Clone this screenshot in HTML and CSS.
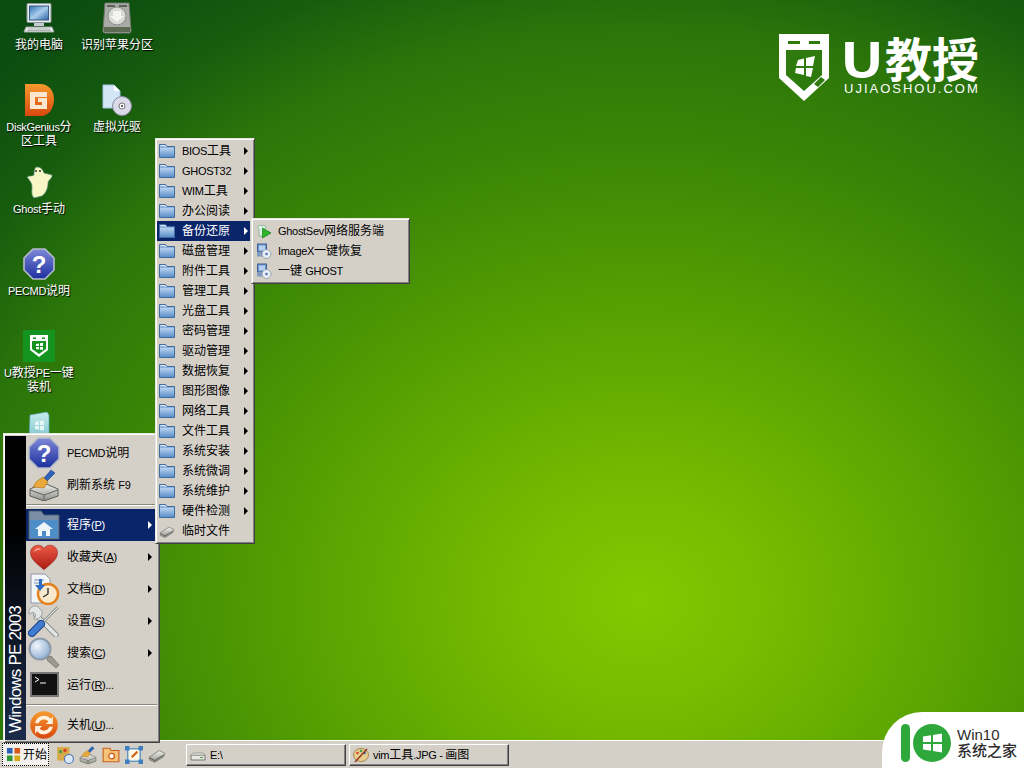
FILE: index.html
```html
<!DOCTYPE html>
<html lang="zh">
<head>
<meta charset="utf-8">
<title>Windows PE 2003</title>
<link rel="stylesheet" href="styles.css">
</head>
<body>
<svg class="defs" width="0" height="0" aria-hidden="true">
  <defs>
    <linearGradient id="gFolder" x1="0" y1="0" x2="0" y2="1"><stop offset="0" stop-color="#b9d2ee"/><stop offset="1" stop-color="#5d8fcb"/></linearGradient>
    <linearGradient id="gScreen" x1="0" y1="0" x2="1" y2="1"><stop offset="0" stop-color="#2d6fb5"/><stop offset=".5" stop-color="#a9cdea"/><stop offset="1" stop-color="#2b62a8"/></linearGradient>
    <linearGradient id="gHelp" x1="0" y1="0" x2="0" y2="1"><stop offset="0" stop-color="#7d88d8"/><stop offset="1" stop-color="#1c2f9e"/></linearGradient>
    <linearGradient id="gOrange" x1="0" y1="0" x2="0" y2="1"><stop offset="0" stop-color="#f79a2e"/><stop offset="1" stop-color="#d9480f"/></linearGradient>
    <linearGradient id="gHeart" x1="0" y1="0" x2="0" y2="1"><stop offset="0" stop-color="#ee5a45"/><stop offset="1" stop-color="#a81a12"/></linearGradient>
    <linearGradient id="gDisk" x1="0" y1="0" x2="0" y2="1"><stop offset="0" stop-color="#f2f2ee"/><stop offset="1" stop-color="#8f8f8a"/></linearGradient>
    <linearGradient id="gTeal" x1="0" y1="0" x2="0" y2="1"><stop offset="0" stop-color="#c9ecef"/><stop offset="1" stop-color="#6fbcc6"/></linearGradient>
    <radialGradient id="gLens" cx=".35" cy=".35" r=".8"><stop offset="0" stop-color="#f0f6fc"/><stop offset="1" stop-color="#7fa3cc"/></radialGradient>

    <symbol id="i-folder" viewBox="0 0 16 16">
      <path d="M.5 1.500h6l1.500 2h7.500v11H.5z" fill="#8eb2dc" stroke="#3f6c9f"/>
      <path d="M1 5h14v9H1z" fill="url(#gFolder)"/>
      <path d="M1.500 2.500h4.500l1 1.500" fill="none" stroke="#e6eef8"/>
    </symbol>
    <symbol id="i-eraser" viewBox="0 0 16 16">
      <path d="M1 10l9-6 5 2.500-1 3-8 5-4.500-2z" fill="url(#gDisk)" stroke="#77776f" stroke-width=".7"/>
      <path d="M1.500 10.500l4.500 2.500 8-5" fill="none" stroke="#5f5f58"/>
    </symbol>
    <symbol id="i-ghostsev" viewBox="0 0 16 16">
      <path d="M1 4l3-2 2 1 2-1 2 2-1.500 2v7H3V6z" fill="#dff3e4" stroke="#6ea487" stroke-width=".7"/>
      <path d="M6.500 5l8.500 5-8.500 5z" fill="#2fb52a" stroke="#137d17" stroke-width=".7"/>
    </symbol>
    <symbol id="i-imagex" viewBox="0 0 16 16">
      <rect x="1.500" y="1" width="9" height="8" fill="#6f97cc" stroke="#3c5f96"/>
      <rect x="3" y="2.500" width="6" height="5" fill="#b6d0ef"/>
      <path d="M1 10h9v3.500H1z" fill="#7f9cc2"/>
      <circle cx="10.500" cy="11" r="4.500" fill="#e8edf4" stroke="#7d8ca5" stroke-width=".7"/>
      <circle cx="10.500" cy="11" r="1.300" fill="#4b74b8"/>
    </symbol>

    <symbol id="i-computer" viewBox="0 0 32 32">
      <rect x="4" y="1.500" width="24" height="19" rx="1" fill="#e8ecee" stroke="#8a969c"/>
      <rect x="6.500" y="4" width="19" height="14" fill="url(#gScreen)" stroke="#385c7c"/>
      <rect x="11" y="21" width="10" height="3" fill="#c5ccd0"/>
      <path d="M3 25h26l2 5H1z" fill="#eef0ee" stroke="#9aa3a3"/>
      <path d="M5 27h22M4 28.500h24" stroke="#a8b0b0"/>
    </symbol>
    <symbol id="i-hdd" viewBox="0 0 32 32">
      <path d="M4 1h24l2 28a2 2 0 0 1-2 2H4a2 2 0 0 1-2-2z" fill="#a9aca6" stroke="#74776f"/>
      <circle cx="16" cy="14" r="9" fill="#d9dad6" stroke="#8b8e87"/>
      <path d="M12 9h8v5h3l-7 6-7-6h3z" fill="#f4f4f2"/>
      <rect x="3" y="25" width="26" height="5" fill="#5e6a52"/>
      <rect x="6" y="3" width="8" height="2" fill="#5d605a"/><rect x="18" y="3" width="8" height="2" fill="#5d605a"/>
    </symbol>
    <symbol id="i-diskgenius" viewBox="0 0 32 32">
      <path d="M2 0h15c9 0 14 7 14 15 0 9-5 17-13 17H2z" fill="url(#gOrange)"/>
      <path d="M7 8h17v5H12v8h7v-3h-4v-4h9v11H7z" fill="#fbe7d0"/>
    </symbol>
    <symbol id="i-vdisc" viewBox="0 0 32 32">
      <path d="M2 1h11l6 6v17H2z" fill="#d3e6f8" stroke="#a8c5e0"/>
      <path d="M13 1v6h6z" fill="#fff"/>
      <circle cx="21" cy="22" r="9.500" fill="#d9d9e8" stroke="#8b8ba5"/>
      <circle cx="21" cy="22" r="3" fill="#fff" stroke="#777"/>
      <circle cx="21" cy="22" r="1" fill="#333"/>
    </symbol>
    <symbol id="i-ghost" viewBox="0 0 32 32">
      <path d="M14 1c4 0 6 3 7 6l8 2c1 3-4 5-4 8 0 5-2 10-6 13l-8 2c-3-3-2-7-2-11 0-3-1-5-5-10 3-2 7 0 7-3 0-4 1-7 3-7z" fill="#f7f6c4" stroke="#4d8a7c" stroke-width=".7"/>
      <circle cx="13" cy="5" r="1" fill="#333"/><circle cx="17" cy="5" r="1" fill="#333"/>
    </symbol>
    <symbol id="i-help" viewBox="0 0 32 32">
      <path d="M10 1h12l9 9v12l-9 9H10l-9-9V10z" fill="url(#gHelp)" stroke="#b6bcc8" stroke-width="1.600"/>
      <text x="16" y="25" class="help-q">?</text>
    </symbol>
    <symbol id="i-ushield" viewBox="0 0 32 32">
      <rect width="32" height="32" fill="#14941e"/>
      <path d="M7 5h18v15l-9 7-9-7z" fill="#fff"/>
      <rect x="10" y="7.500" width="3" height="1.500" fill="#14941e"/><rect x="19" y="7.500" width="3" height="1.500" fill="#14941e"/>
      <path d="M9 11h14v8l-7 5-7-5z" fill="#14941e"/>
      <path d="M13 14l3-.5v2.500h-3zM17 13.300l3-.5v3.200h-3zM13 17h3v2.500l-3-.5zM17 17h3v3l-3-.5z" fill="#fff"/>
    </symbol>
    <symbol id="i-teal" viewBox="0 0 32 32">
      <path d="M7 3l17-3 2 3v29H6z" fill="url(#gTeal)" stroke="#5aa8b4" stroke-width=".7"/>
      <path d="M12 10l4-.7V13h-4zM17 9l4-.7V13h-4zM12 14h4v3.700l-4-.7zM17 14h4v4.600l-4-.7z" fill="#e6f6f7"/>
    </symbol>

    <symbol id="i-broom" viewBox="0 0 32 32">
      <path d="M2 20l14-6 14 6v7l-14 5-14-5z" fill="url(#gDisk)" stroke="#5c5c56"/>
      <path d="M2 21l14 5 14-5M16 26v6" fill="none" stroke="#65655f"/>
      <path d="M23 1l4 3-8 8-3-3z" fill="#2e62b8" stroke="#1d3f80" stroke-width=".6"/>
      <path d="M15 8l5 5-4 6-11-1 3-5z" fill="#e9a93a" stroke="#a46b14" stroke-width=".6"/>
    </symbol>
    <symbol id="i-home" viewBox="0 0 32 32">
      <path d="M1 2h12l3 4h15v24H1z" fill="#7a8ea5" stroke="#4d5e73"/>
      <path d="M2 11h28v18H2z" fill="#4f8dc8"/>
      <path d="M16 13l9 7h-3v7H10v-7H7z" fill="#eef5fb"/>
      <rect x="14" y="22" width="4" height="5" fill="#4f8dc8"/>
    </symbol>
    <symbol id="i-heart" viewBox="-3 -4 38 38">
      <path d="M16 30C6 22 0 17 0 10 0 4 5 1 9 1c3 0 5 1 7 4 2-3 4-4 7-4 4 0 9 3 9 9 0 7-6 12-16 20z" fill="url(#gHeart)" stroke="#8e2118" stroke-width=".7"/>
      <path d="M4 9c1-4 6-6 9-3-4 0-7 1-9 3z" fill="#f7a79c"/>
    </symbol>
    <symbol id="i-doc" viewBox="0 0 32 32">
      <path d="M3 1h14l5 5v24H3z" fill="#f2f5fa" stroke="#8d98aa"/>
      <path d="M6 7h10M6 10h8" stroke="#7a8db0"/>
      <circle cx="20" cy="21" r="10" fill="#f8e9cc" stroke="#e5801e" stroke-width="2.400"/>
      <path d="M20 21v-6M20 21l-5 3" stroke="#333" stroke-width="1.400"/>
      <path d="M11 6v6H7l5 6 5-6h-3V6z" fill="#2d6dc4"/>
    </symbol>
    <symbol id="i-tools" viewBox="0 0 32 32">
      <path d="M8 10l20 20" stroke="#8a8f8f" stroke-width="5.500" stroke-linecap="round"/>
      <path d="M8 10l20 20" stroke="#e4e6e6" stroke-width="3.500" stroke-linecap="round"/>
      <path d="M9 1C4 0 0 4 1 9l4-2 3 3-2 4c5 1 9-3 8-8z" fill="#e4e6e6" stroke="#8a8f8f" stroke-width=".8"/>
      <path d="M13 19L30 2" stroke="#8d9292" stroke-width="2.500"/>
      <path d="M13 19L30 2" stroke="#eceeee" stroke-width="1"/>
      <path d="M4 28l9-9" stroke="#1e4587" stroke-width="8" stroke-linecap="round"/>
      <path d="M4 28l9-9" stroke="#3f7bd0" stroke-width="6" stroke-linecap="round"/>
    </symbol>
    <symbol id="i-search" viewBox="0 0 32 32">
      <circle cx="12" cy="12" r="10.500" fill="url(#gLens)" stroke="#8d9aa7" stroke-width="2"/>
      <path d="M20 20l3-1 8 9-3 3-9-8z" fill="#9a9a90" stroke="#6a6a62" stroke-width=".7"/>
    </symbol>
    <symbol id="i-run" viewBox="0 0 32 32">
      <rect x="3" y="4" width="27" height="23" fill="#111" stroke="#77777a" stroke-width="2"/>
      <path d="M7 8l4 2.500L7 13" fill="none" stroke="#fff"/>
      <path d="M12 14h6" stroke="#fff"/>
    </symbol>
    <symbol id="i-power" viewBox="-2 -2 36 36">
      <circle cx="16" cy="16" r="15.500" fill="url(#gOrange)"/>
      <path d="M6 14a10.500 10.500 0 0 1 18-5l2-3v9h-8l3-3a6.500 6.500 0 0 0-11 2zM26 18a10.500 10.500 0 0 1-18 5l-2 3v-9h8l-3 3a6.500 6.500 0 0 0 11-2z" fill="#fdf0dc"/>
    </symbol>

    <symbol id="i-winflag" viewBox="0 0 16 16">
      <rect x="1" y="1" width="6" height="6" fill="#2e62b8"/><rect x="9" y="1" width="6" height="6" fill="#d95a1a"/>
      <rect x="1" y="9" width="6" height="6" fill="#2f9a35"/><rect x="9" y="9" width="6" height="6" fill="#d9a81a"/>
    </symbol>
    <symbol id="i-q1" viewBox="0 0 16 16">
      <rect x="1" y="1" width="11" height="12" fill="#d7a948"/>
      <circle cx="4" cy="5" r="1.500" fill="#3fa24a"/><circle cx="8" cy="4" r="1.500" fill="#d8412c"/>
      <circle cx="11.500" cy="11.500" r="4" fill="#dbe7f5" stroke="#4d78b8"/>
    </symbol>
    <symbol id="i-q3" viewBox="0 0 16 16">
      <path d="M1 2h6l1 2h7v10H1z" fill="#f5c27a" stroke="#c9601a"/>
      <circle cx="8.500" cy="9" r="2.500" fill="#fff" stroke="#c9601a" stroke-width="1.200"/>
    </symbol>
    <symbol id="i-q4" viewBox="0 0 16 16">
      <rect x="2.500" y="2.500" width="11" height="11" fill="#fdfbe8" stroke="#3f7fc0"/>
      <path d="M0 0h4v4H0zM12 0h4v4h-4zM0 12h4v4H0zM12 12h4v4h-4z" fill="#3f7fc0"/>
      <path d="M6 10l5-5" stroke="#d1671b" stroke-width="2"/>
    </symbol>
    <symbol id="i-drive" viewBox="0 0 16 16">
      <path d="M1 8h14v5H1z" fill="#e8e8e4" stroke="#77776f"/>
      <path d="M3 6h10l2 2H1z" fill="#f8f8f6" stroke="#9a9a92"/>
      <rect x="10" y="10" width="3" height="1" fill="#4a9a3a"/>
    </symbol>
    <symbol id="i-paint" viewBox="0 0 16 16">
      <ellipse cx="8" cy="8" rx="7.500" ry="6.500" fill="#e9cd8e" stroke="#8f6b28" stroke-width=".7"/>
      <circle cx="4.500" cy="6" r="1.300" fill="#d8412c"/><circle cx="8" cy="4" r="1.300" fill="#3fa24a"/><circle cx="11.500" cy="6" r="1.300" fill="#2e62b8"/>
      <path d="M2 15L14 2" stroke="#8f3a20" stroke-width="1.500"/>
    </symbol>
  </defs>
</svg>

<main class="desktop">
  <div class="icon-grid">
    <div class="icon-col">
      <div class="desk-icon"><svg class="di"><use href="#i-computer"/></svg><span class="dl">我的电脑</span></div>
      <div class="desk-icon"><svg class="di"><use href="#i-diskgenius"/></svg><span class="dl"><span class="lat">DiskGenius</span>分区工具</span></div>
      <div class="desk-icon"><svg class="di"><use href="#i-ghost"/></svg><span class="dl"><span class="lat">Ghost</span>手动</span></div>
      <div class="desk-icon"><svg class="di"><use href="#i-help"/></svg><span class="dl"><span class="lat">PECMD</span>说明</span></div>
      <div class="desk-icon"><svg class="di"><use href="#i-ushield"/></svg><span class="dl"><span class="lat">U</span>教授<span class="lat">PE</span>一键装机</span></div>
      <div class="desk-icon"><svg class="di"><use href="#i-teal"/></svg></div>
    </div>
    <div class="icon-col">
      <div class="desk-icon"><svg class="di"><use href="#i-hdd"/></svg><span class="dl">识别苹果分区</span></div>
      <div class="desk-icon"><svg class="di"><use href="#i-vdisc"/></svg><span class="dl">虚拟光驱</span></div>
    </div>
  </div>

  <div class="brand">
    <svg class="brand-mark" viewBox="0 0 50 67">
      <path d="M0 0h50v44L25 67 0 44z" fill="#fff"/>
      <rect x="9" y="7" width="12" height="3" fill="#2f7a0c"/><rect x="30" y="7" width="11" height="3" fill="#2f7a0c"/>
      <path d="M7 16h36v25L25 57 7 41z" fill="#2f7a0c"/>
      <path d="M19 26l6-1.500V32h-8zM27 24l9-2-2 10h-7zM17 34h8v7l-9-2zM27 34h7l-2 9-5-1z" fill="#fff"/>
      <path d="M35 50l7-7 4 3-7 7z" fill="#2f7a0c"/>
    </svg>
    <div class="brand-text">
      <div class="brand-name"><span class="brand-u">U</span>教授</div>
      <div class="brand-url">UJIAOSHOU.COM</div>
    </div>
  </div>

  <nav class="menu start-menu">
    <div class="sidebar"><span class="side-text">Windows PE 2003</span></div>
    <div class="start-items">
      <div class="s-row"><svg class="si"><use href="#i-help"/></svg><span class="s-label"><span class="lat">PECMD</span>说明</span></div>
      <div class="s-row"><svg class="si"><use href="#i-broom"/></svg><span class="s-label">刷新系统 <span class="lat">F9</span></span></div>
      <div class="sep"></div>
      <div class="s-row active"><svg class="si"><use href="#i-home"/></svg><span class="s-label">程序<span class="lat">(<u>P</u>)</span></span><i class="arrow"></i></div>
      <div class="s-row"><svg class="si"><use href="#i-heart"/></svg><span class="s-label">收藏夹<span class="lat">(<u>A</u>)</span></span><i class="arrow"></i></div>
      <div class="s-row"><svg class="si"><use href="#i-doc"/></svg><span class="s-label">文档<span class="lat">(<u>D</u>)</span></span><i class="arrow"></i></div>
      <div class="s-row"><svg class="si"><use href="#i-tools"/></svg><span class="s-label">设置<span class="lat">(<u>S</u>)</span></span><i class="arrow"></i></div>
      <div class="s-row"><svg class="si"><use href="#i-search"/></svg><span class="s-label">搜索<span class="lat">(<u>C</u>)</span></span><i class="arrow"></i></div>
      <div class="s-row"><svg class="si"><use href="#i-run"/></svg><span class="s-label">运行<span class="lat">(<u>R</u>)...</span></span></div>
      <div class="sep"></div>
      <div class="s-row"><svg class="si"><use href="#i-power"/></svg><span class="s-label">关机<span class="lat">(<u>U</u>)...</span></span></div>
    </div>
  </nav>

  <nav class="menu prog-menu">
    <div class="p-row"><svg class="pi"><use href="#i-folder"/></svg><span class="p-label"><span class="lat">BIOS</span>工具</span><i class="arrow"></i></div>
    <div class="p-row"><svg class="pi"><use href="#i-folder"/></svg><span class="p-label"><span class="lat">GHOST32</span></span><i class="arrow"></i></div>
    <div class="p-row"><svg class="pi"><use href="#i-folder"/></svg><span class="p-label"><span class="lat">WIM</span>工具</span><i class="arrow"></i></div>
    <div class="p-row"><svg class="pi"><use href="#i-folder"/></svg><span class="p-label">办公阅读</span><i class="arrow"></i></div>
    <div class="p-row active"><svg class="pi"><use href="#i-folder"/></svg><span class="p-label">备份还原</span><i class="arrow"></i></div>
    <div class="p-row"><svg class="pi"><use href="#i-folder"/></svg><span class="p-label">磁盘管理</span><i class="arrow"></i></div>
    <div class="p-row"><svg class="pi"><use href="#i-folder"/></svg><span class="p-label">附件工具</span><i class="arrow"></i></div>
    <div class="p-row"><svg class="pi"><use href="#i-folder"/></svg><span class="p-label">管理工具</span><i class="arrow"></i></div>
    <div class="p-row"><svg class="pi"><use href="#i-folder"/></svg><span class="p-label">光盘工具</span><i class="arrow"></i></div>
    <div class="p-row"><svg class="pi"><use href="#i-folder"/></svg><span class="p-label">密码管理</span><i class="arrow"></i></div>
    <div class="p-row"><svg class="pi"><use href="#i-folder"/></svg><span class="p-label">驱动管理</span><i class="arrow"></i></div>
    <div class="p-row"><svg class="pi"><use href="#i-folder"/></svg><span class="p-label">数据恢复</span><i class="arrow"></i></div>
    <div class="p-row"><svg class="pi"><use href="#i-folder"/></svg><span class="p-label">图形图像</span><i class="arrow"></i></div>
    <div class="p-row"><svg class="pi"><use href="#i-folder"/></svg><span class="p-label">网络工具</span><i class="arrow"></i></div>
    <div class="p-row"><svg class="pi"><use href="#i-folder"/></svg><span class="p-label">文件工具</span><i class="arrow"></i></div>
    <div class="p-row"><svg class="pi"><use href="#i-folder"/></svg><span class="p-label">系统安装</span><i class="arrow"></i></div>
    <div class="p-row"><svg class="pi"><use href="#i-folder"/></svg><span class="p-label">系统微调</span><i class="arrow"></i></div>
    <div class="p-row"><svg class="pi"><use href="#i-folder"/></svg><span class="p-label">系统维护</span><i class="arrow"></i></div>
    <div class="p-row"><svg class="pi"><use href="#i-folder"/></svg><span class="p-label">硬件检测</span><i class="arrow"></i></div>
    <div class="p-row"><svg class="pi"><use href="#i-eraser"/></svg><span class="p-label">临时文件</span></div>
  </nav>

  <nav class="menu sub-menu">
    <div class="p-row"><svg class="pi"><use href="#i-ghostsev"/></svg><span class="p-label"><span class="lat">GhostSev</span>网络服务端</span></div>
    <div class="p-row"><svg class="pi"><use href="#i-imagex"/></svg><span class="p-label"><span class="lat">ImageX</span>一键恢复</span></div>
    <div class="p-row"><svg class="pi"><use href="#i-imagex"/></svg><span class="p-label">一键 <span class="lat">GHOST</span></span></div>
  </nav>
</main>

<footer class="taskbar">
  <button class="start-btn"><svg class="flag"><use href="#i-winflag"/></svg><span class="start-text">开始</span></button>
  <div class="quick">
    <svg class="qi"><use href="#i-q1"/></svg>
    <svg class="qi"><use href="#i-broom"/></svg>
    <svg class="qi"><use href="#i-q3"/></svg>
    <svg class="qi"><use href="#i-q4"/></svg>
    <svg class="qi"><use href="#i-eraser"/></svg>
  </div>
  <div class="task-btn"><svg class="pi"><use href="#i-drive"/></svg><span class="lat">E:\</span></div>
  <div class="task-btn"><svg class="pi"><use href="#i-paint"/></svg><span><span class="lat">vim</span>工具<span class="lat">.JPG - </span>画图</span></div>
</footer>

<aside class="badge">
  <i class="badge-bar"></i>
  <svg class="badge-disc" viewBox="0 0 38 38">
    <circle cx="19" cy="19" r="19" fill="#2ea83a"/>
    <path d="M10 12.500l8-1.200V18h-8zM20 11l9-1.400V18h-9zM10 20h8v6.700l-8-1.200zM20 20h9v8.400L20 27z" fill="#fff"/>
  </svg>
  <div class="badge-text">
    <div class="badge-win">Win10</div>
    <div class="badge-name">系统之家</div>
  </div>
</aside>
</body>
</html>
```
FILE: styles.css
```css
* { box-sizing: border-box; }
html, body { margin: 0; height: 100%; }
body {
  width: 1024px;
  height: 768px;
  overflow: hidden;
  position: relative;
  display: flex;
  flex-direction: column;
  font: 12px/14px "Liberation Sans", "Noto Sans CJK SC", sans-serif;
  color: #000;
}
.defs { position: absolute; }
.help-q { font: bold 24px "Liberation Sans", sans-serif; fill: #fff; text-anchor: middle; }
.lat { font-size: 11px; letter-spacing: -.3px; }

.desktop {
  flex: 1;
  position: relative;
  background: radial-gradient(ellipse 900px 760px at 640px 600px, #82c900 0, #76bb00 15%, #549e02 40%, #3a8506 60%, #2c750a 75%, #175c0e 87%, #0c4c10 100%);
}

.icon-grid { display: flex; padding-top: 2px; }
.icon-col { width: 78px; display: flex; flex-direction: column; }
.desk-icon { height: 82px; display: flex; flex-direction: column; align-items: center; }
.di { width: 32px; height: 32px; flex: none; }
.dl {
  width: 76px;
  margin-top: 4px;
  text-align: center;
  color: #fff;
  text-shadow: 1px 1px 1px #000;
  line-height: 14px;
  word-break: break-all;
}

.brand { position: absolute; left: 779px; top: 34px; display: flex; gap: 15px; color: #fff; }
.brand-mark { width: 50px; height: 67px; }
.brand-text { display: flex; flex-direction: column; }
.brand-name { font: bold 47px/46px "Noto Sans CJK SC", sans-serif; white-space: nowrap; }
.brand-u { display: inline-block; width: 41px; margin-left: -4px; margin-right: 4px; transform: scaleX(1.25); transform-origin: left center; }
.brand-url { font: 13px/16px "Liberation Sans", sans-serif; letter-spacing: 2px; margin-top: 1px; white-space: nowrap; }

.menu {
  position: absolute;
  background: #d4d0c8;
  border: 1px solid;
  border-color: #e8e6e0 #404040 #404040 #e8e6e0;
  box-shadow: inset 1px 1px 0 #fff, inset -1px -1px 0 #808080;
}
.start-menu { left: 3px; top: 433px; width: 157px; height: 310px; display: flex; padding: 2px 2px 2px 1px; }
.sidebar {
  width: 21px;
  background: linear-gradient(#000 0, #000 30%, #1b2c4b 100%);
  display: flex;
  justify-content: center;
  align-items: flex-end;
  padding-bottom: 7px;
}
.side-text {
  writing-mode: vertical-rl;
  transform: rotate(180deg);
  color: #fff;
  font-size: 17px;
  line-height: 20px;
  letter-spacing: -.8px;
  white-space: nowrap;
}
.start-items { flex: 1; display: flex; flex-direction: column; padding-top: 1px; }
.s-row { height: 32px; flex: none; display: flex; align-items: center; padding-left: 2px; padding-right: 5px; }
.si { width: 32px; height: 32px; flex: none; }
.s-label { flex: 1; margin-left: 7px; white-space: nowrap; }
.s-row u { text-decoration: underline; }
.sep { height: 8px; flex: none; position: relative; }
.sep::after {
  content: "";
  position: absolute;
  left: 0;
  right: 0;
  top: 3px;
  height: 2px;
  background: linear-gradient(#8b8881 50%, #fff 50%);
}
.active { background: #0a246a; color: #fff; }
.arrow {
  width: 0;
  height: 0;
  flex: none;
  border-left: 4px solid #000;
  border-top: 4px solid transparent;
  border-bottom: 4px solid transparent;
}
.active .arrow { border-left-color: #fff; }

.prog-menu { left: 155px; top: 138px; width: 100px; height: 406px; padding: 2px 4px 2px 1px; }
.sub-menu { left: 251px; top: 218px; width: 159px; height: 66px; padding: 2px; }
.p-row { height: 20px; display: flex; align-items: center; padding: 0 2px; }
.p-row.active { background: #0a246a; }
.pi { width: 16px; height: 16px; flex: none; }
.p-label { flex: 1; margin-left: 7px; white-space: nowrap; }
.sub-menu .p-label { margin-left: 6px; }

.taskbar {
  height: 28px;
  flex: none;
  background: #d4d0c8;
  border-top: 1px solid #fff;
  display: flex;
  align-items: center;
  padding: 0 0 0 2px;
}
.start-btn {
  width: 47px;
  height: 23px;
  padding: 0 0 0 3px;
  border: 1px dotted #000;
  background: #f2f1ee;
  font: inherit;
  display: flex;
  align-items: center;
  gap: 2px;
}
.flag { width: 15px; height: 15px; flex: none; }
.start-text { white-space: nowrap; }
.quick { display: flex; gap: 5px; margin-left: 7px; margin-right: 20px; }
.qi { width: 18px; height: 18px; flex: none; }
.task-btn {
  width: 160px;
  height: 22px;
  margin-right: 3px;
  display: flex;
  align-items: center;
  gap: 4px;
  padding-left: 3px;
  border: 1px solid;
  border-color: #fff #404040 #404040 #fff;
  box-shadow: inset -1px -1px 0 #808080;
  white-space: nowrap;
}

.badge {
  position: absolute;
  right: 0;
  bottom: 0;
  width: 142px;
  height: 56px;
  background: #fff;
  border-top-left-radius: 40px;
  display: flex;
  align-items: flex-start;
  padding: 12px 0 0 19px;
}
.badge-bar { width: 9px; height: 38px; background: #2ea83a; border-radius: 5px; flex: none; }
.badge-disc { width: 38px; height: 38px; margin-left: 3px; flex: none; }
.badge-text { margin-left: 6px; margin-top: 3px; color: #2b2b2b; }
.badge-win { font: 15px/15px "Liberation Sans", sans-serif; }
.badge-name { font: 500 15px/16px "Noto Sans CJK SC", sans-serif; white-space: nowrap; }
```
